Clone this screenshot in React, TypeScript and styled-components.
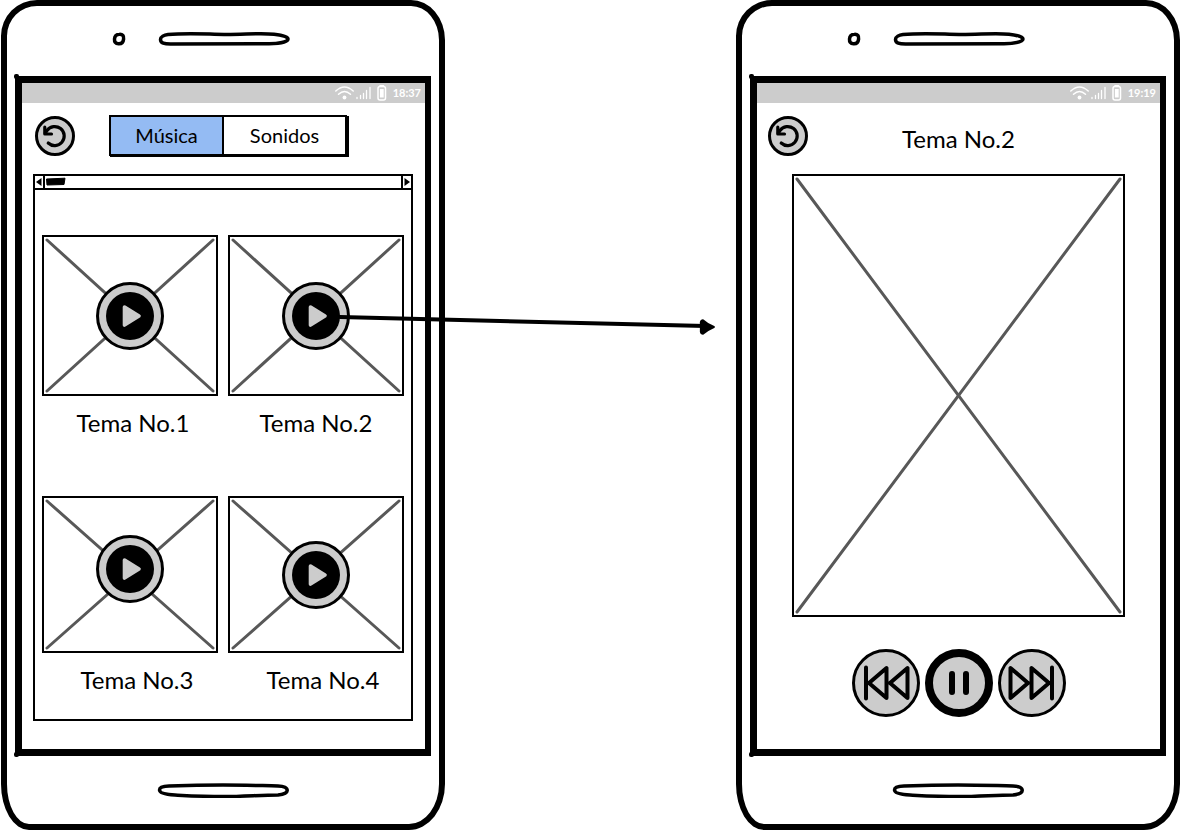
import React, { ReactNode, useState } from "react";
import styled, { createGlobalStyle, css } from "styled-components";

const INK = "#000";
const GREY = "#cccccc";
const BLUE = "#94bbf3";

const GlobalStyle = createGlobalStyle`
  *, *::before, *::after { box-sizing: border-box; }
  body {
    margin: 0;
    background: #fff;
    color: ${INK};
    font-family: Lato, "Open Sans", sans-serif;
  }
  button { font: inherit; color: inherit; cursor: pointer; }
  svg { display: block; }
`;

const Board = styled.main`
  position: relative;
  display: grid;
  grid-template-columns: 444fr 291fr 444fr;
  align-items: start;
  padding-left: 1px;
`;

const PhoneBody = styled.section<{ $column: number }>`
  grid-column: ${(p) => p.$column};
  grid-row: 1;
  display: flex;
  flex-direction: column;
  padding: 0 8px;
  background: #fff;
  border: 6px solid ${INK};
  border-radius: 36px 34px 36px 28px / 36px 40px 46px 46px;
`;

const Earpiece = styled.div`
  display: grid;
  grid-template-columns: 1fr auto 1fr;
  align-items: center;
  height: 70px;
  padding-bottom: 4px;
`;

const CameraSlot = styled.div`
  justify-self: end;
  margin-right: 29px;
`;

const Chin = styled.div`
  display: flex;
  justify-content: center;
  align-items: center;
  height: 68px;
`;

const Screen = styled.div`
  position: relative;
  display: flex;
  flex-direction: column;
  min-height: 680px;
  border: 7px solid ${INK};
  border-right-width: 6px;

  &::before,
  &::after {
    content: "";
    position: absolute;
    left: -8px;
    width: 5px;
    height: 5px;
    border-radius: 2px;
    background: ${INK};
  }
  &::before { top: -9px; }
  &::after { bottom: -8px; }
`;

const StatusBar = styled.div`
  display: flex;
  align-items: center;
  justify-content: flex-end;
  height: 20px;
  padding-right: 4px;
  background: ${GREY};
  color: #fff;
`;

const Clock = styled.time`
  margin-left: 4px;
  font-size: 11px;
  line-height: 20px;
  font-weight: 700;
`;

const Header = styled.header`
  display: flex;
  align-items: center;
  gap: 34px;
  height: 71px;
  padding: 12px 13px 17px;
`;

const TitleHeader = styled.header`
  display: grid;
  grid-template-columns: 1fr auto 1fr;
  align-items: center;
  height: 71px;
  padding: 12px 11px 17px;
`;

const Title = styled.h1`
  margin: 0;
  padding-top: 6px;
  font-size: 24px;
  line-height: 28px;
  font-weight: 400;
`;

const RoundButton = styled.button<{ $size: number; $ring?: number }>`
  display: flex;
  flex: none;
  align-items: center;
  justify-content: center;
  width: ${(p) => p.$size}px;
  height: ${(p) => p.$size}px;
  padding: 0;
  border: ${(p) => p.$ring ?? 3}px solid ${INK};
  border-radius: 50%;
  background: ${GREY};
`;

const Segments = styled.div`
  display: flex;
  align-self: flex-start;
  height: 41px;
  border: 2px solid ${INK};
  box-shadow: 1px 1px 0 ${INK}, 2px 1px 0 ${INK};
`;

const Segment = styled.button<{ $active: boolean; $width: number }>`
  width: ${(p) => p.$width}px;
  padding: 0 0 2px;
  border: 0;
  background: ${(p) => (p.$active ? BLUE : "#fff")};
  font-size: 20px;
  line-height: 24px;

  & + & {
    border-left: 2px solid ${INK};
  }
`;

const Panel = styled.div`
  margin: 0 12px 0 11px;
  border: 2px solid ${INK};
`;

const ScrollStrip = styled.div`
  display: flex;
  height: 14px;
  border-bottom: 2px solid ${INK};
`;

const ScrollButton = styled.button<{ $side: "left" | "right" }>`
  display: flex;
  align-items: center;
  justify-content: center;
  width: 10px;
  padding: 0;
  border: 0 solid ${INK};
  background: #fff;
  ${(p) =>
    p.$side === "left"
      ? css`border-right-width: 2px;`
      : css`border-left-width: 2px;`}
`;

const ScrollTrack = styled.div`
  flex: 1;
  padding-top: 1px;
`;

const Gallery = styled.ul`
  display: grid;
  grid-template-columns: 1fr 1fr;
  gap: 59px 10px;
  margin: 0;
  padding: 45px 7px 25px;
  list-style: none;
`;

const Track = styled.li`
  display: flex;
  flex-direction: column;
`;

const Picture = styled.div<{ $height: number; $raise?: number }>`
  position: relative;
  display: flex;
  align-items: center;
  justify-content: center;
  height: ${(p) => p.$height}px;
  padding-bottom: ${(p) => p.$raise ?? 0}px;
  border: 2px solid ${INK};
`;

const CrossLines = styled.svg`
  position: absolute;
  top: 3px;
  left: 3px;
  width: calc(100% - 6px);
  height: calc(100% - 6px);
  overflow: visible;
  stroke: #585858;
  stroke-width: 3;
  stroke-linecap: round;
`;

const PlayButton = styled(RoundButton)`
  position: relative;
`;

const Caption = styled.span<{ $indent: number }>`
  margin-top: 13px;
  padding-left: ${(p) => p.$indent}px;
  font-size: 24px;
  line-height: 28px;
  text-align: center;
`;

const Cover = styled.div`
  margin: 0 35px;
`;

const Player = styled.div`
  display: flex;
  justify-content: center;
  gap: 5px;
  margin-top: 32px;
`;

const FlowArrow = styled.svg`
  position: absolute;
  left: 28.8%;
  top: 310px;
  width: 31.6%;
  height: 30px;
  overflow: visible;
  pointer-events: none;
`;

const StatusIcons = () => (
  <svg width="56" height="20" viewBox="0 0 56 20" fill="none" stroke="#fff" strokeLinecap="round" aria-hidden="true">
    <path d="M2.800 8 Q11.500 0 20.200 8" strokeWidth="1.500" />
    <path d="M5.500 11.300 Q11.500 5.800 17.500 11.300" strokeWidth="1.500" />
    <circle cx="11.500" cy="14.500" r="1.900" fill="#fff" stroke="none" />
    <path d="M24 15.500v-1M27.500 15.500v-3M30.500 15.500v-5M33.500 15.500v-8M37 15.500v-11" strokeWidth="1.300" />
    <rect x="45" y="3.500" width="7.500" height="13.500" rx="2" strokeWidth="1.500" />
    <path d="M47 2.800h3.500" strokeWidth="1.500" />
    <path d="M48.800 6v8.500" strokeWidth="3.800" strokeLinecap="butt" />
  </svg>
);

const CameraDot = () => (
  <svg width="16" height="16" viewBox="0 0 16 16" aria-hidden="true">
    <path d="M8.500 3.200 C11.600 3 13 5 12.600 8 C12.300 11 10.500 13 7.500 12.800 C4.500 12.700 3.300 10.800 3.500 8 C3.700 5 5.500 3.300 8.500 3.200Z" fill="none" stroke={INK} strokeWidth="3.500" />
  </svg>
);

const SpeakerSlot = () => (
  <svg width="134" height="16" viewBox="0 0 134 16" aria-hidden="true">
    <path
      d="M12 3.600 C30 1.600 48 3 68 3.400 C88 3.600 104 1.700 118 3.200 C126 4 132 6 132 8 C132 11 122 12.600 113 12.800 L16 13 C8 13.200 4.500 12 4.500 8.500 C4.500 6 8 4.100 12 3.600Z"
      fill="none"
      stroke={INK}
      strokeWidth="3.500"
    />
  </svg>
);

const HomeSlot = () => (
  <svg width="132" height="16" viewBox="0 0 132 16" aria-hidden="true">
    <path
      d="M12 4.100 C30 3.400 48 3 66 3 C88 3 104 3.600 121 3.900 C127 4.100 130.400 5.800 130.200 8.500 C130 11.500 126 12.500 121 13 C104 13 88 14.500 66 14.600 C48 14.600 28 13.500 18 13 C9 12.500 2.500 11 2.500 8 C2.500 5.500 6 4.300 12 4.100Z"
      fill="none"
      stroke={INK}
      strokeWidth="3.500"
    />
  </svg>
);

const BackIcon = () => (
  <svg width="34" height="34" viewBox="3 3 34 34" fill="none" stroke={INK} strokeWidth="3.200" strokeLinecap="round" strokeLinejoin="round">
    <path d="M13.200 27 A9.500 9.500 0 1 0 12 14.500 L10.300 17" />
    <path d="M9.800 11.200 V18 H16.500" />
  </svg>
);

const PlayIcon = () => (
  <svg width="62" height="62" viewBox="0 0 62 62">
    <circle cx="31" cy="31" r="24" fill={INK} />
    <path d="M25.500 22 L40 31 L25.500 40Z" fill={GREY} stroke={GREY} strokeWidth="3.600" strokeLinejoin="round" />
  </svg>
);

const PreviousIcon = () => (
  <svg width="62" height="62" viewBox="0 0 62 62" fill="none" stroke={INK} strokeWidth="4" strokeLinecap="round" strokeLinejoin="round">
    <path d="M11 15.500V46.500M31.500 16V46L14 31ZM52.500 16V46L35 31Z" />
  </svg>
);

const NextIcon = () => (
  <svg width="62" height="62" viewBox="0 0 62 62" fill="none" stroke={INK} strokeWidth="4" strokeLinecap="round" strokeLinejoin="round">
    <path d="M51 15.500V46.500M9.500 16V46L27 31ZM30.500 16V46L48 31Z" />
  </svg>
);

const PauseIcon = () => (
  <svg width="52" height="52" viewBox="0 0 52 52" stroke={INK} strokeWidth="6" strokeLinecap="round">
    <path d="M19 17V35M33 17V35" />
  </svg>
);

const BackButton = () => (
  <RoundButton type="button" $size={40} aria-label="Volver">
    <BackIcon />
  </RoundButton>
);

const Cross = () => (
  <CrossLines aria-hidden="true">
    <line x1="0" y1="0" x2="100%" y2="100%" />
    <line x1="100%" y1="0" x2="0" y2="100%" />
  </CrossLines>
);

const Phone = ({ column, time, children }: { column: number; time: string; children: ReactNode }) => (
  <PhoneBody $column={column}>
    <Earpiece>
      <CameraSlot>
        <CameraDot />
      </CameraSlot>
      <SpeakerSlot />
    </Earpiece>
    <Screen>
      <StatusBar>
        <StatusIcons />
        <Clock>{time}</Clock>
      </StatusBar>
      {children}
    </Screen>
    <Chin>
      <HomeSlot />
    </Chin>
  </PhoneBody>
);

const tabs = [
  { name: "Música", width: 111 },
  { name: "Sonidos", width: 123 },
];

const tracks = [
  { name: "Tema No.1", height: 161, raise: 0, indent: 6 },
  { name: "Tema No.2", height: 161, raise: 0, indent: 0 },
  { name: "Tema No.3", height: 157, raise: 12, indent: 14 },
  { name: "Tema No.4", height: 157, raise: 0, indent: 14 },
];

export default function App() {
  const [active, setActive] = useState("Música");

  return (
    <>
      <GlobalStyle />
      <Board>
        <Phone column={1} time="18:37">
          <Header>
            <BackButton />
            <Segments>
              {tabs.map((tab) => (
                <Segment
                  key={tab.name}
                  type="button"
                  $active={active === tab.name}
                  $width={tab.width}
                  aria-pressed={active === tab.name}
                  onClick={() => setActive(tab.name)}
                >
                  {tab.name}
                </Segment>
              ))}
            </Segments>
          </Header>
          <Panel>
            <ScrollStrip>
              <ScrollButton type="button" $side="left" aria-label="Desplazar a la izquierda">
                <svg width="8" height="10" viewBox="0 0 8 10">
                  <path d="M1 5 L6.500 1 V9Z" fill={INK} />
                </svg>
              </ScrollButton>
              <ScrollTrack>
                <svg width="24" height="10" viewBox="0 0 24 10" aria-hidden="true">
                  <path d="M1.500 2 L20 1.200 L19 7.500 L2 8Z" fill={INK} stroke={INK} strokeLinejoin="round" />
                </svg>
              </ScrollTrack>
              <ScrollButton type="button" $side="right" aria-label="Desplazar a la derecha">
                <svg width="8" height="10" viewBox="0 0 8 10">
                  <path d="M7 5 L1.500 1 V9Z" fill={INK} />
                </svg>
              </ScrollButton>
            </ScrollStrip>
            <Gallery>
              {tracks.map((track) => (
                <Track key={track.name}>
                  <Picture $height={track.height} $raise={track.raise}>
                    <Cross />
                    <PlayButton type="button" $size={68} aria-label={`Reproducir ${track.name}`}>
                      <PlayIcon />
                    </PlayButton>
                  </Picture>
                  <Caption $indent={track.indent}>{track.name}</Caption>
                </Track>
              ))}
            </Gallery>
          </Panel>
        </Phone>

        <Phone column={3} time="19:19">
          <TitleHeader>
            <BackButton />
            <Title>Tema No.2</Title>
          </TitleHeader>
          <Cover>
            <Picture $height={443}>
              <Cross />
            </Picture>
          </Cover>
          <Player>
            <RoundButton type="button" $size={68} aria-label="Anterior">
              <PreviousIcon />
            </RoundButton>
            <RoundButton type="button" $size={68} $ring={8} aria-label="Pausa">
              <PauseIcon />
            </RoundButton>
            <RoundButton type="button" $size={68} aria-label="Siguiente">
              <NextIcon />
            </RoundButton>
          </Player>
        </Phone>

        <FlowArrow aria-hidden="true">
          <line x1="0" y1="7" x2="98%" y2="16" stroke={INK} strokeWidth="4" strokeLinecap="round" />
          <svg x="100%" y="17" overflow="visible">
            <path d="M1 0 Q-6 3 -10 6.800 Q-12.500 6.500 -12 3 V-3 Q-12.500 -6.500 -10 -6.800 Q-6 -3 1 0Z" fill={INK} stroke={INK} strokeWidth="2" strokeLinejoin="round" />
          </svg>
        </FlowArrow>
      </Board>
    </>
  );
}
